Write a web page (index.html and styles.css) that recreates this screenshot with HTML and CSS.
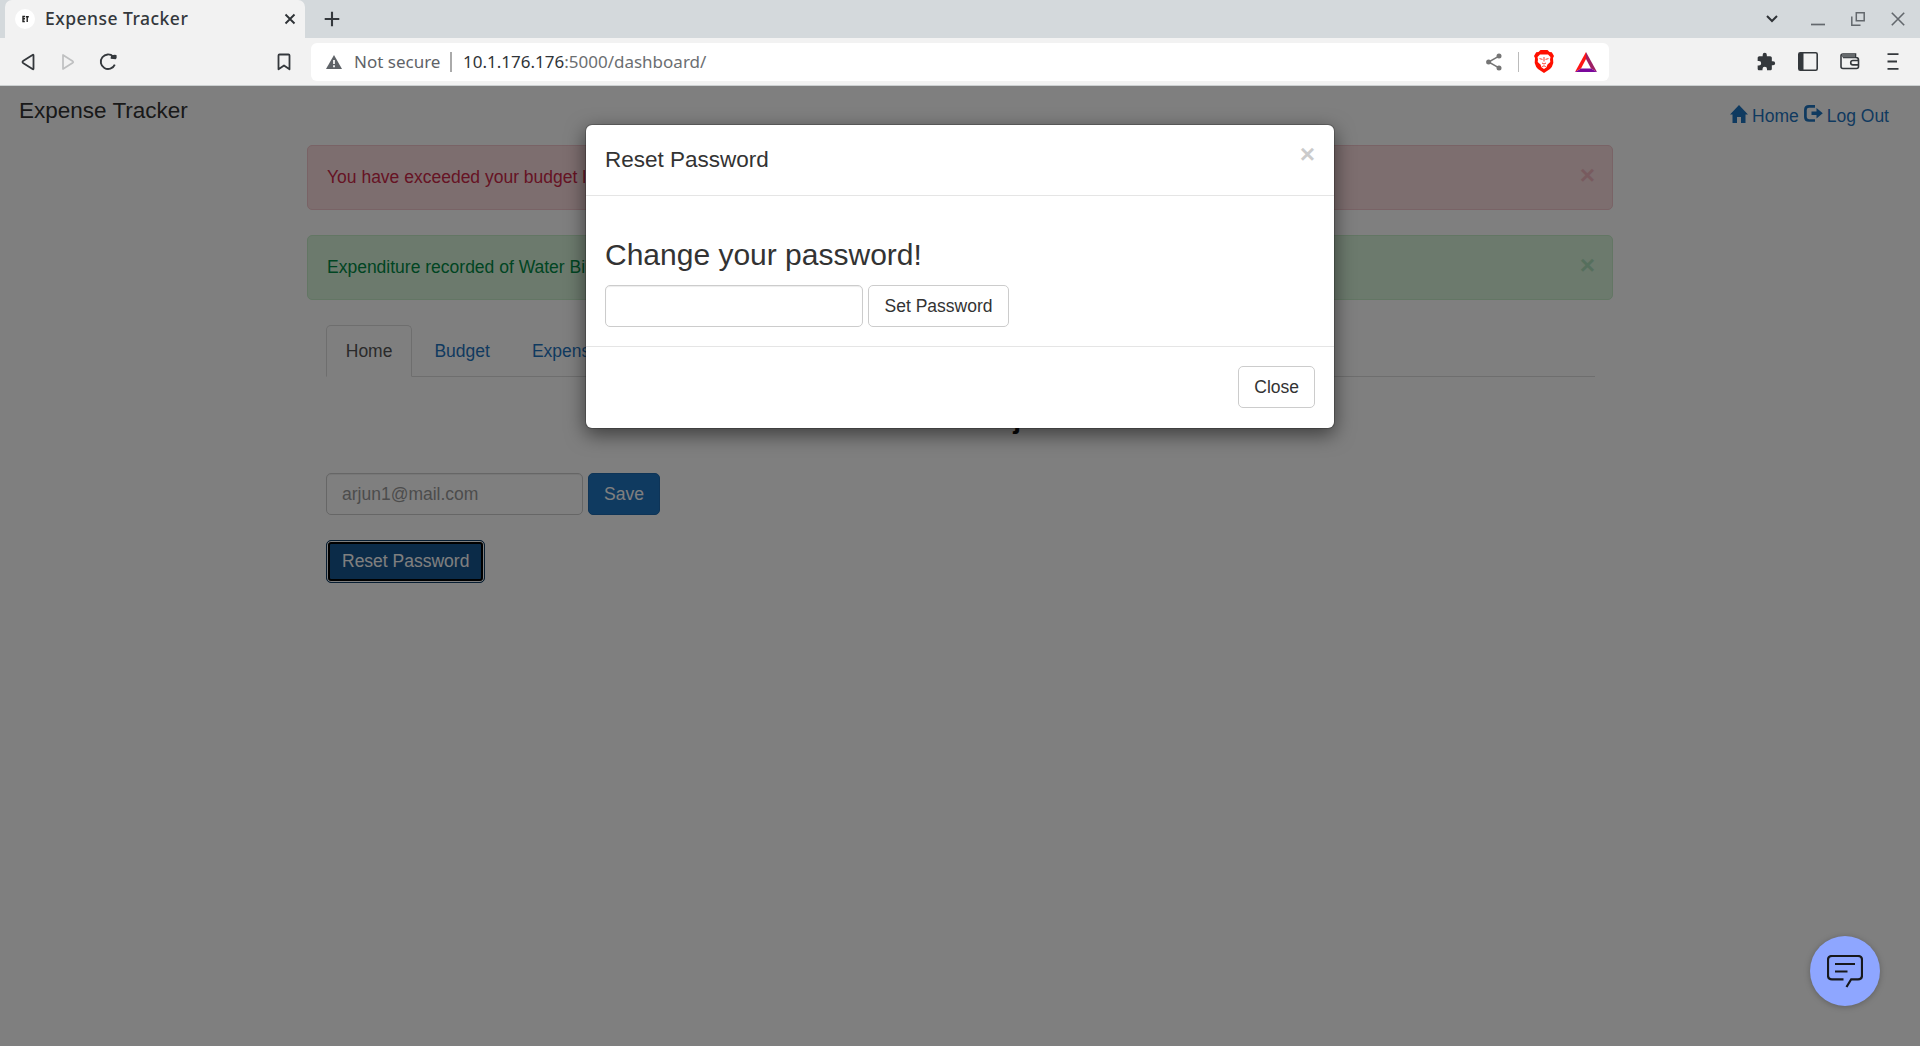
FILE: index.html
```html
<!DOCTYPE html>
<html lang="en">
<head>
<meta charset="utf-8">
<title>Expense Tracker</title>
<link rel="stylesheet" href="styles.css">
</head>
<body>
<div class="browser">
  <div class="tabstrip">
    <div class="browser-tab">
      <span class="favicon"><svg width="20" height="20" viewBox="0 0 20 20"><circle cx="10" cy="10" r="10" fill="#fff"/><path d="M10 7.500H8v5h1.800M8 9.800h2M10.800 7.700h3M12.200 7.500v5.500" fill="none" stroke="#222" stroke-width="1.400"/></svg></span>
      <span class="tab-title">Expense Tracker</span>
      <svg class="tab-close" width="12" height="12" viewBox="0 0 12 12"><path d="M1.5 1.5l9 9m0-9l-9 9" stroke="#2f3337" stroke-width="1.9"/></svg>
    </div>
    <svg class="new-tab" width="16" height="16" viewBox="0 0 16 16"><path d="M8 .7v14.6M.7 8h14.6" stroke="#34383c" stroke-width="2.1"/></svg>
    <div class="window-controls">
      <svg width="12" height="8" viewBox="0 0 12 8"><path d="M1 1l5 5 5-5" fill="none" stroke="#2f3337" stroke-width="2"/></svg>
      <svg width="14" height="14" viewBox="0 0 14 14"><path d="M0 12.5h14" stroke="#63686d" stroke-width="1.7"/></svg>
      <svg width="14" height="14" viewBox="0 0 14 14"><path d="M5.3.8h7.9v7.9H5.3zM.8 4.5v8.7h8.7" fill="none" stroke="#63686d" stroke-width="1.5"/></svg>
      <svg width="14" height="14" viewBox="0 0 14 14"><path d="M.8.8l12.4 12.4m0-12.4L.8 13.2" stroke="#63686d" stroke-width="1.6"/></svg>
    </div>
  </div>
  <div class="toolbar">
    <div class="nav-buttons">
      <svg width="14" height="18" viewBox="0 0 14 18"><path d="M12.500 2.500v13q0 1.300-1 .6L2 9.900q-1-.9 0-1.800l9.500-6.200q1-.7 1 .6z" fill="none" stroke="#34383c" stroke-width="1.800" stroke-linejoin="round"/></svg>
      <svg width="14" height="18" viewBox="0 0 14 18"><path d="M2 2v14l9.800-6.300q.9-.7 0-1.400z" fill="none" stroke="#bfc0c1" stroke-width="1.700" stroke-linejoin="round"/></svg>
      <svg width="19" height="18" viewBox="0 0 19 18"><path d="M14.300 3.600A7.300 7.300 0 1 0 15.800 11.600" fill="none" stroke="#34383c" stroke-width="1.900"/><path d="M12.300 2.200q4.800-.9 5.300.1.500 2.500-.9 4l-5-.6q-.5-1 .6-3.500z" fill="#34383c"/></svg>
    </div>
    <svg class="bookmark" width="14" height="18" viewBox="0 0 14 18"><path d="M2.500 1.500h9q1 0 1 1v13.800L7 12.400l-5.500 3.900V2.500q0-1 1-1z" fill="none" stroke="#34383c" stroke-width="1.800" stroke-linejoin="round"/></svg>
    <div class="address-bar">
      <svg width="16" height="14" viewBox="0 0 16 14"><path d="M8 0l8 14H0z" fill="#5f6368"/><path d="M8 5v4M8 10.300v2" stroke="#fff" stroke-width="1.700"/></svg>
      <span class="not-secure">Not secure</span>
      <span class="address-divider"></span>
      <span class="url"><span class="host">10.1.176.176</span>:5000/dashboard/</span>
      <div class="address-icons">
        <svg width="16" height="18" viewBox="0 0 16 18"><path d="M13 3.200L2.600 9l10.400 5.800" fill="none" stroke="#757575" stroke-width="1.500"/><g fill="#757575"><circle cx="13" cy="3" r="2.500"/><circle cx="2.600" cy="9" r="2.500"/><circle cx="13" cy="15" r="2.500"/></g></svg>
        <span class="shield-divider"></span>
        <svg class="shield" width="20" height="23" viewBox="0 0 20 23"><path d="M6.500 0h7l2 2 2.300.3L20 6l-1 2 .3 5q-1 4-3.300 6l-6 4-6-4Q1.700 17 .7 13L1 8 0 6l2.200-3.700L4.500 2z" fill="#ff1000"/><path d="M6 4.500h8l2.500 2.500-.5 2.500.3 2.500-2.800 2.500-1 2.800-2.500 1.700-2.500-1.700-1-2.800L3.700 12l.3-2.500L3.500 7z" fill="#fff"/><path d="M5.500 8.600l3 .8M14.500 8.600l-3 .8M10 7v4.500M8 13l2 1 2-1M8.200 16.600l1.800-.8 1.800.8" fill="none" stroke="#ff2b18" stroke-width=".9"/></svg>
        <svg class="rewards" width="22" height="20" viewBox="0 0 22 20"><path d="M11 0L0 20l6-3.500L11 7z" fill="#ff1515"/><path d="M11 0l11 20-6-3.500L11 7z" fill="#9e1f63"/><path d="M0 20h22l-6-3.500H6z" fill="#7a089c"/></svg>
      </div>
    </div>
    <div class="extensions">
      <svg width="20" height="20" viewBox="0 0 24 24"><path d="M20.500 11H19V7c0-1.100-.9-2-2-2h-4V3.500a2.500 2.500 0 0 0-5 0V5H4c-1.100 0-2 .9-2 2v3.800h1.500a2.700 2.700 0 0 1 0 5.400H2V20c0 1.100.9 2 2 2h3.800v-1.500a2.700 2.700 0 0 1 5.400 0V22H17c1.100 0 2-.9 2-2v-4h1.500a2.500 2.500 0 0 0 0-5z" fill="#34383c"/></svg>
      <svg width="20" height="19" viewBox="0 0 20 19"><rect x=".8" y=".8" width="18.400" height="17.400" rx="1.500" fill="none" stroke="#34383c" stroke-width="1.600"/><path d="M1 1h4.500v17H1z" fill="#34383c"/></svg>
      <svg width="20" height="17" viewBox="0 0 20 17"><path d="M3 4.500h13q2.500 0 2.500 2.500v6.500q0 2-2 2H3q-2 0-2-2V3q0-2 2-2h12.500v3.500M19 7.500h-6q-2.300 0-2.300 2.200t2.300 2.200h6" fill="none" stroke="#34383c" stroke-width="1.600"/><path d="M2 1h13v3.300H2z" fill="#666a6d"/></svg>
      <svg width="12" height="17" viewBox="0 0 12 17"><path d="M.5 1.200h11M.5 8.500H10M.5 15.800h11" stroke="#34383c" stroke-width="1.800"/></svg>
    </div>
  </div>
</div>

<div class="page">
  <header class="site-header">
    <div class="brand">Expense Tracker</div>
    <nav class="site-nav">
      <a><svg width="18" height="18" viewBox="0 0 18 18"><path d="M9 0l9 9.500h-2.500V18H11v-6H7v6H2.500V9.500H0z"/></svg> Home</a>
      <a><svg width="19" height="17" viewBox="0 0 19 17"><path d="M11 1.400H5Q1.400 1.400 1.400 5v7q0 3.500 3.600 3.500h6" fill="none" stroke="currentColor" stroke-width="2.700"/><path d="M12.500 3l6.300 5.300-6.300 5.300v-3.500H7.500V6.500h5z"/></svg> Log Out</a>
    </nav>
  </header>
  <main class="content">
    <div class="alert danger"><span>You have exceeded your budget limit</span><b class="dismiss">×</b></div>
    <div class="alert success"><span>Expenditure recorded of Water Bill</span><b class="dismiss">×</b></div>
    <div class="panel">
      <div class="tabs">
        <a class="tab active">Home</a>
        <a class="tab">Budget</a>
        <a class="tab">Expenses</a>
      </div>
      <h3 class="welcome">Welcome arjun!</h3>
      <div class="form-row">
        <input class="control" type="text" placeholder="arjun1@mail.com">
        <button class="btn primary">Save</button>
      </div>
      <button class="btn primary focused">Reset Password</button>
    </div>
  </main>

  <div class="backdrop">
    <div class="modal">
      <div class="modal-header">
        <div class="modal-title">Reset Password</div>
        <b class="dismiss">×</b>
      </div>
      <div class="modal-body">
        <h2 class="modal-heading">Change your password!</h2>
        <div class="form-row">
          <input class="control" type="password">
          <button class="btn">Set Password</button>
        </div>
      </div>
      <div class="modal-footer"><button class="btn">Close</button></div>
    </div>
  </div>

  <div class="chat">
    <svg width="36" height="33" viewBox="0 0 36 33"><path d="M16.500 24.300H5q-4 0-4-4V5q0-4 4-4h26q4 0 4 4v15.300q0 4-4 4h-6.800L19.500 32M8 9h20M8 16.500h12.500" fill="none" stroke="#17181c" stroke-width="2.200"/></svg>
  </div>
</div>
</body>
</html>
```
FILE: styles.css
```css
* { box-sizing: border-box; }

body {
  margin: 0;
  height: 1046px;
  overflow: hidden;
  display: flex;
  flex-direction: column;
  background: #fff;
  color: #333;
  font: 17.5px/25px "Liberation Sans", Arial, sans-serif;
}

svg { display: block; flex: none; }

/* Browser window */
.browser {
  height: 86px;
  flex: none;
  background: #f2f2f2;
  border-bottom: 1px solid #ccd0d1;
  font-family: "Noto Sans", "Open Sans", sans-serif;
}
.tabstrip {
  height: 38px;
  display: flex;
  align-items: center;
  padding-left: 5px;
  background: #d4d9dc;
}
.browser-tab {
  width: 300px;
  height: 38px;
  display: flex;
  align-items: center;
  padding: 0 9px 0 10px;
  background: #f2f2f2;
  border-radius: 7px 7px 0 0;
}
.tab-title {
  flex: 1;
  margin-left: 10px;
  padding-bottom: 2px;
  color: #34383c;
  font-size: 17.5px;
  font-weight: 500;
  letter-spacing: .48px;
  white-space: nowrap;
}
.new-tab { margin-left: 19px; }
.window-controls {
  display: flex;
  align-items: center;
  gap: 26px;
  margin-left: auto;
  padding-right: 15px;
}
.window-controls svg:first-child { margin-right: 7px; }

.toolbar {
  height: 47px;
  display: flex;
  align-items: center;
}
.nav-buttons {
  width: 257px;
  display: flex;
  gap: 26px;
  padding-left: 21px;
}
.nav-buttons svg:last-child { margin-left: -2px; }
.bookmark { margin-left: 20px; }
.address-bar {
  width: 1298px;
  height: 38px;
  display: flex;
  align-items: center;
  margin-left: 20px;
  padding-left: 15px;
  background: #fff;
  border-radius: 6px;
  color: #6b6e71;
  font-size: 17px;
}
.not-secure { margin-left: 12px; width: 86px; color: #5f6368; white-space: nowrap; }
.address-divider { width: 2px; height: 20px; margin: 0 11px 0 10px; background: #aaa; }
.host { color: #303438; }
.address-icons { display: flex; align-items: center; margin-left: auto; padding-right: 12px; }
.shield-divider { width: 1px; height: 20px; margin: 0 15px 0 16px; background: #bbb; }
.rewards { margin-left: 21px; }
.extensions { display: flex; align-items: center; gap: 22px; margin-left: auto; padding-right: 21px; }
.extensions svg:nth-child(3) { margin-right: 5px; }

/* Page */
.page {
  position: relative;
  flex: 1;
}
.site-header {
  height: 59px;
  display: flex;
  justify-content: space-between;
  padding: 12px 31px 0 19px;
}
.brand { font-size: 22.5px; }
.site-nav {
  display: flex;
  gap: 5px;
  padding-top: 6px;
}
.site-nav a { display: flex; gap: 4px; color: #1f74c0; }
.site-nav svg { margin-top: 1px; fill: currentColor; }

.content { width: 1306px; margin: 0 auto; }
.alert {
  height: 65px;
  display: flex;
  justify-content: space-between;
  margin-bottom: 25px;
  padding: 19px;
  border: 1px solid;
  border-radius: 5px;
}
.alert .dismiss { margin-right: -2px; }
.danger { background: #fadcde; border-color: #f2c6cc; color: #cc2848; }
.success { background: #d8f4da; border-color: #c6edc9; color: #008a45; }
.dismiss {
  color: currentColor;
  font-size: 26.25px;
  line-height: 26px;
  opacity: .2;
  margin-top: -3px;
}

.panel { padding: 0 18px 0 19px; }
.tabs { display: flex; height: 52px; border-bottom: 1px solid #ddd; }
.tab {
  height: 52px;
  margin-right: 2.5px;
  padding: 13px 18.75px;
  border: 1px solid transparent;
  border-radius: 5px 5px 0 0;
  color: #1f74c0;
}
.tab.active { border-color: #ddd; border-bottom-color: #fff; background: #fff; color: #555; }
.welcome {
  margin: 26px 0 38px;
  font-size: 28px;
  line-height: 32px;
  text-align: center;
  color: #111;
}

.form-row { display: flex; gap: 5px; }
.control {
  width: 257px;
  height: 42px;
  padding: 7px 15px;
  border: 1px solid #ccc;
  border-radius: 5px;
  background: #fff;
  box-shadow: inset 0 1px 1px rgba(0, 0, 0, .075);
  font: inherit;
}
.control::placeholder { color: #999; }
.btn {
  height: 42px;
  padding: 0 15px;
  border: 1px solid #ccc;
  border-radius: 5px;
  background: #fff;
  color: #333;
  font: inherit;
}
.primary { border-color: #1c69ae; background: #1f74c0; color: #fff; }
.focused {
  height: 43px;
  margin-top: 25px;
  border-color: #0e3b62;
  background: #165690;
  box-shadow: inset 0 0 0 1px #fff, inset 0 0 0 3px #000;
}

/* Dialog */
.backdrop {
  position: absolute;
  inset: 0;
  padding-top: 38px;
  background: rgba(0, 0, 0, .5);
}
.modal {
  width: 750px;
  height: 305px;
  margin: 0 auto;
  display: flex;
  flex-direction: column;
  border: 1px solid rgba(0, 0, 0, .2);
  border-radius: 7px;
  background: #fff;
  background-clip: padding-box;
  box-shadow: 0 6px 19px rgba(0, 0, 0, .5);
}
.modal-header {
  height: 71px;
  display: flex;
  justify-content: space-between;
  padding: 22px 19px 0;
  border-bottom: 1px solid #e5e5e5;
}
.modal-title { font-size: 22.5px; }
.modal .dismiss { margin-top: -6px; color: #000; }
.modal-body { height: 151px; padding: 42px 19px 0; border-bottom: 1px solid #e5e5e5; }
.modal-body .control { width: 258px; }
.modal-body .btn { width: 141px; }
.modal-heading { margin: 0 0 13px; font-size: 30px; line-height: 34px; font-weight: 500; }
.modal-footer { display: flex; justify-content: flex-end; padding: 19px; }

/* Chat launcher */
.chat {
  position: absolute;
  left: 1810px;
  top: 850px;
  width: 70px;
  height: 70px;
  display: flex;
  align-items: center;
  justify-content: center;
  border-radius: 50%;
  background: #8ea6ff;
  box-shadow: 0 1px 6px rgba(0, 0, 0, .25);
}
```
